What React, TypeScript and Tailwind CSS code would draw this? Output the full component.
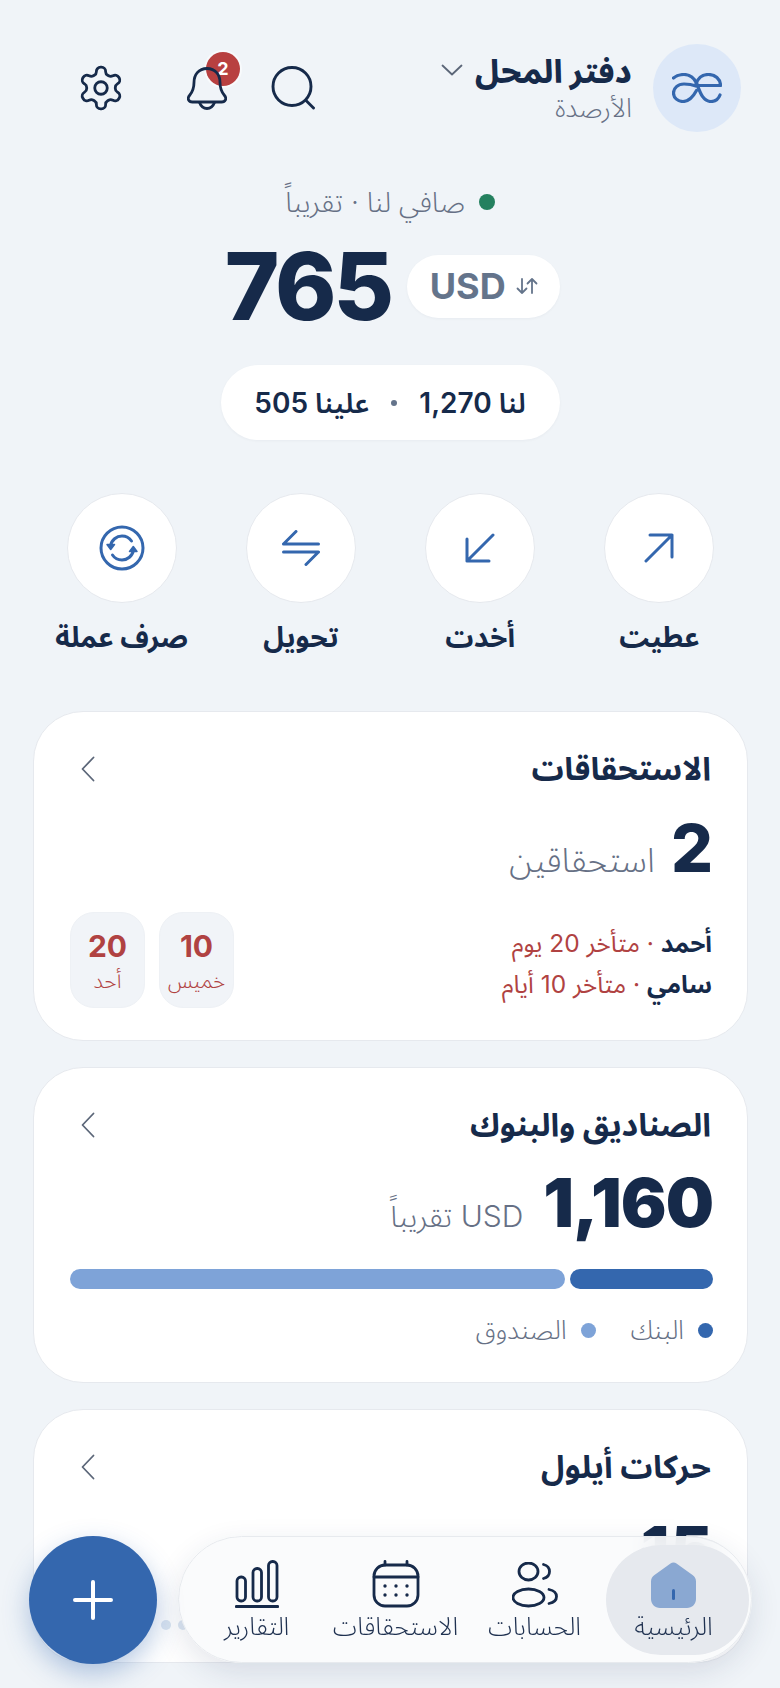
import React from "react";

const NAVY = "#162a4a";

function Logo() {
  return (
    <svg width="50" height="30" viewBox="0 0 50 30" fill="none" stroke="#3467ae" strokeWidth="3.200" strokeLinecap="round" strokeLinejoin="round">
      <path d="M1.500 5C5 2 9 1.500 12 1.500c6 0 10 3.500 12.500 8.500 3 7 5.500 18.500 14.500 18.500 4 0 7.500-2.500 9-6.500" />
      <path d="M24 13c-4-1.500-8-2-12-2C6 11 1.500 15 1.500 20S6 28.500 11 28.500c6 0 10-4.500 13.500-11" />
      <path d="M24 12.500h24.500C48.500 6 43 1.500 36.500 1.500 30 1.500 26 5 24 11" />
    </svg>
  );
}

function Chevron() {
  return (
    <svg className="ml-[11px]" width="14" height="26" viewBox="0 0 14 26" fill="none" stroke="#5b6678" strokeWidth="1.800" strokeLinecap="round" strokeLinejoin="round">
      <path d="M12.500 1.500 1.500 13l11 11.500" />
    </svg>
  );
}

function Search() {
  return (
    <svg width="44" height="44" viewBox="0 0 44 44" fill="none" stroke={NAVY} strokeWidth="2.900" strokeLinecap="round">
      <circle cx="21" cy="20.500" r="19" />
      <path d="M35 34.500l7.500 7.500" />
    </svg>
  );
}

function Bell() {
  return (
    <svg className="relative" width="40" height="43" viewBox="0 0 40 43" fill="none" stroke={NAVY} strokeWidth="2.800" strokeLinecap="round" strokeLinejoin="round">
      <path d="M20 1.500C11.500 1.500 7 8 7 15.500c0 6-1.500 9.500-4.500 13-2.500 3-1 6.500 3 6.500h29c4 0 5.500-3.500 3-6.500-3-3.500-4.500-7-4.500-13C33 8 28.500 1.500 20 1.500Z" />
      <path d="M12.500 35.500c1.500 4 4.500 6 7.500 6s6-2 7.500-6" />
    </svg>
  );
}

function Gear() {
  return (
    <svg className="m-[-4px]" width="50" height="50" viewBox="0 0 24 24" fill="none" stroke={NAVY} strokeWidth="1.350" strokeLinecap="round" strokeLinejoin="round">
      <path d="M12.220 2h-.44a2 2 0 0 0-2 2v.18a2 2 0 0 1-1 1.730l-.43.250a2 2 0 0 1-2 0l-.15-.080a2 2 0 0 0-2.730.730l-.220.380a2 2 0 0 0 .730 2.730l.150.100a2 2 0 0 1 1 1.720v.510a2 2 0 0 1-1 1.740l-.150.090a2 2 0 0 0-.730 2.730l.220.380a2 2 0 0 0 2.730.730l.150-.080a2 2 0 0 1 2 0l.430.250a2 2 0 0 1 1 1.730V20a2 2 0 0 0 2 2h.44a2 2 0 0 0 2-2v-.18a2 2 0 0 1 1-1.730l.430-.250a2 2 0 0 1 2 0l.150.080a2 2 0 0 0 2.730-.730l.220-.390a2 2 0 0 0-.730-2.730l-.150-.080a2 2 0 0 1-1-1.740v-.500a2 2 0 0 1 1-1.740l.150-.090a2 2 0 0 0 .730-2.730l-.220-.380a2 2 0 0 0-2.730-.730l-.150.080a2 2 0 0 1-2 0l-.430-.250a2 2 0 0 1-1-1.730V4a2 2 0 0 0-2-2z" />
      <circle cx="12" cy="12" r="3" />
    </svg>
  );
}

function Swap() {
  return (
    <svg width="22" height="18" viewBox="0 0 22 18" fill="none" stroke="#64748b" strokeWidth="1.800" strokeLinecap="round" strokeLinejoin="round">
      <path d="M6 2v14M1.500 11.500 6 16l4.500-4.500" />
      <path d="M16 16V2M11.500 6.500 16 2l4.500 4.500" />
    </svg>
  );
}

function ActionIcon({ kind }: { kind: string }) {
  const common = { fill: "none", stroke: "#3467ae", strokeWidth: 3, strokeLinecap: "round" as const, strokeLinejoin: "round" as const };
  if (kind === "up")
    return (
      <svg width="30" height="30" viewBox="0 0 30 30" {...common}>
        <path d="M2 28 28 2M6 2h22v22" />
      </svg>
    );
  if (kind === "down")
    return (
      <svg width="30" height="30" viewBox="0 0 30 30" {...common}>
        <path d="M28 2 2 28M2 6v22h22" />
      </svg>
    );
  if (kind === "swap")
    return (
      <svg width="38" height="36" viewBox="0 0 38 36" {...common}>
        <path d="M1.500 14h35M1.500 14 14 1.500M36.500 22h-35M36.500 22 24 34.500" />
      </svg>
    );
  return (
    <svg width="46" height="46" viewBox="0 0 46 46" {...common}>
      <circle cx="23" cy="23" r="21" />
      <path d="M11.500 21c1-6 6-10 11.500-10 4 0 7.500 2 9.500 5" />
      <path d="M34.500 25c-1 6-6 10-11.500 10-4 0-7.500-2-9.500-5" />
      <path d="M8 19.500h7.500L11.700 24.500Z" fill="#3467ae" strokeWidth="1.500" />
      <path d="M38 26.500h-7.500l3.800-5Z" fill="#3467ae" strokeWidth="1.500" />
    </svg>
  );
}

function Action({ kind, label }: { kind: string; label: string }) {
  return (
    <div className="flex flex-col items-center">
      <div className="w-[110px] h-[110px] rounded-full bg-white border border-[#e6e9ee] flex items-center justify-center">
        <ActionIcon kind={kind} />
      </div>
      <div className="mt-[16px] text-[28px] leading-[36px] font-bold text-[#162a4a] whitespace-nowrap">{label}</div>
    </div>
  );
}

function CardHead({ title }: { title: string }) {
  return (
    <div className="flex items-center justify-between h-[36px] pr-[2px]">
      <div className="text-[32px] leading-[36px] font-bold text-[#162a4a]">{title}</div>
      <Chevron />
    </div>
  );
}

function Tile({ n, d }: { n: string; d: string }) {
  return (
    <div className="w-[75px] h-[96px] rounded-[24px] bg-[#f1f4f8] border border-[#eef1f5] flex flex-col items-center">
      <div className="mt-[15px] text-[30px] leading-[36px] font-bold text-[#b04242]">{n}</div>
      <div className="mt-[4px] text-[21px] leading-[26px] font-light text-[#b04242]">{d}</div>
    </div>
  );
}

function NavItem({ label, children }: { label: string; children: React.ReactNode }) {
  return (
    <div className="relative flex-1 flex flex-col items-center">
      <div className="h-[48px] flex items-end justify-center">{children}</div>
      <div className="mt-[3px] text-[25px] leading-[30px] font-light text-[#1f3150] whitespace-nowrap">{label}</div>
    </div>
  );
}

export default function App() {
  return (
    <div
      dir="rtl"
      className="relative w-[780px] h-[1688px] overflow-hidden bg-[#f0f4f8] text-[#162a4a]"
      style={{ fontFamily: "Inter, 'Noto Sans Arabic', 'Noto Sans', 'DejaVu Sans', sans-serif" }}
    >
      <header className="flex items-center justify-between pt-[44px] pr-[39px] pl-[80px]">
        <div className="flex items-center gap-[21px]">
          <div className="w-[88px] h-[88px] rounded-full bg-[#dde8f8] flex items-center justify-center">
            <Logo />
          </div>
          <div className="flex flex-col items-start">
            <div className="flex items-start gap-[12px]">
              <div className="text-[32px] leading-[36px] font-extrabold pt-[1px]">دفتر المحل</div>
              <svg className="mt-[11px]" width="22" height="12" viewBox="0 0 22 12" fill="none" stroke="#5b6678" strokeWidth="1.800" strokeLinecap="round" strokeLinejoin="round">
                <path d="M1.500 1.500 11 10.500l9.500-9" />
              </svg>
            </div>
            <div className="mt-[2px] text-[26px] leading-[32px] font-light text-[#667085]">الأرصدة</div>
          </div>
        </div>
        <div className="flex items-center">
          <div className="ml-[44px]">
            <Search />
          </div>
          <div className="relative w-[40px] h-[43px] ml-[65px]">
            <div className="absolute left-[19px] top-[-15px] w-[34px] h-[34px] rounded-full bg-[#b84040] ring-2 ring-[#f8fafc] text-white text-[18px] font-bold flex items-center justify-center">
              2
            </div>
            <Bell />
          </div>
          <Gear />
        </div>
      </header>

      <section className="flex flex-col items-center mt-[52px]">
        <div className="flex items-center gap-[14px] h-[36px]">
          <span className="w-[16px] h-[16px] rounded-full bg-[#24805f]" />
          <span className="text-[28px] leading-[36px] font-light text-[#667085]">صافي لنا · تقريباً</span>
        </div>
        <div className="flex items-center gap-[16px] mt-[26px] h-[80px] pl-[5px]">
          <div className="w-[153px] h-[63px] rounded-full bg-white flex items-center justify-center gap-[10px] shadow-[0_1px_3px_rgba(15,23,42,0.04)]">
            <Swap />
            <span className="text-[36px] font-bold text-[#64748b]">USD</span>
          </div>
          <div className="text-[93px] leading-[80px] font-extrabold tracking-[-3px] text-[#162a4a]">765</div>
        </div>
        <div className="mt-[39px] w-[339px] h-[75px] rounded-full bg-white flex items-center justify-center gap-[22px] text-[28px] font-semibold text-[#162a4a] shadow-[0_1px_3px_rgba(15,23,42,0.04)]">
          <span>لنا 1,270</span>
          <span className="w-[6px] h-[6px] rounded-full bg-[#64748b]" />
          <span>علينا 505</span>
        </div>
      </section>

      <section className="grid grid-cols-4 pl-[32px] pr-[31px] mt-[53px]">
        <Action kind="up" label="عطيت" />
        <Action kind="down" label="أخدت" />
        <Action kind="swap" label="تحويل" />
        <Action kind="rotate" label="صرف عملة" />
      </section>

      <main className="pl-[33px] pr-[32px] mt-[56px] flex flex-col gap-[26px]">
        <article className="h-[330px] rounded-[50px] bg-white border border-[#e6e9ee] pr-[34px] pl-[36px] pt-[39px]">
          <CardHead title="الاستحقاقات" />
          <div className="flex items-baseline gap-[16px] mt-[28px]">
            <div className="text-[66px] leading-[66px] font-extrabold text-[#162a4a]">2</div>
            <div className="text-[34px] font-light text-[#667085]">استحقاقين</div>
          </div>
          <div className="flex items-center justify-between mt-[27px]">
            <div className="flex flex-col gap-[5px] pt-[6px] pr-[1px]">
              <div className="text-[24.5px] leading-[36px] text-[#b04242]">
                <b className="font-bold text-[#162a4a]">أحمد</b> · متأخر 20 يوم
              </div>
              <div className="text-[24.5px] leading-[36px] text-[#b04242]">
                <b className="font-bold text-[#162a4a]">سامي</b> · متأخر 10 أيام
              </div>
            </div>
            <div className="flex gap-[14px]">
              <Tile n="10" d="خميس" />
              <Tile n="20" d="أحد" />
            </div>
          </div>
        </article>

        <article className="h-[316px] rounded-[50px] bg-white border border-[#e6e9ee] pr-[34px] pl-[36px] pt-[39px]">
          <CardHead title="الصناديق والبنوك" />
          <div className="flex items-baseline gap-[20px] mt-[26px]">
            <div className="text-[68px] leading-[66px] font-black tracking-[-1px] text-[#162a4a]">1,160</div>
            <div className="text-[30px] font-light text-[#667085]">USD تقريباً</div>
          </div>
          <div className="flex gap-[5px] mt-[30px]">
            <div className="w-[143px] h-[20px] rounded-[10px] bg-[#3467ae]" />
            <div className="flex-1 h-[20px] rounded-[10px] bg-[#7ea3d8]" />
          </div>
          <div className="flex items-center mt-[23px] gap-[35px] text-[26px] leading-[36px] font-light text-[#667085]">
            <div className="flex items-center gap-[14px]">
              <span className="w-[15px] h-[15px] rounded-full bg-[#3467ae]" />
              <span>البنك</span>
            </div>
            <div className="flex items-center gap-[14px]">
              <span className="w-[15px] h-[15px] rounded-full bg-[#7ea3d8]" />
              <span>الصندوق</span>
            </div>
          </div>
        </article>

        <article className="h-[254px] rounded-[50px] bg-white border border-[#e6e9ee] pr-[34px] pl-[36px] pt-[39px]">
          <CardHead title="حركات أيلول" />
          <div className="flex items-baseline gap-[20px] mt-[32px]">
            <div className="text-[66px] leading-[66px] font-extrabold text-[#162a4a]">15</div>
          </div>
          <div className="flex gap-[7px] mt-[37px] flex-row-reverse justify-start pl-[91px]">
            <span className="w-[10px] h-[10px] rounded-full bg-[#dce6f2]" />
            <span className="w-[10px] h-[10px] rounded-full bg-[#dce6f2]" />
          </div>
        </article>
      </main>

      {/* floating bar */}
      <div className="absolute left-[178px] top-[1536px] w-[574px] h-[127px] rounded-full bg-[#fafbfc]/90 backdrop-blur-md border border-[#e7eaee] shadow-[0_10px_30px_rgba(30,50,90,0.12)] flex items-start px-[8px] pt-[23px]">
        <div className="absolute right-[2px] top-[8px] w-[143px] h-[110px] rounded-full bg-[#e6e9ee]" />
        <NavItem label="الرئيسية">
          <svg width="45" height="46" viewBox="0 0 45 46">
            <path d="M19.500 1.500c1.800-1.300 4.200-1.300 6 0L41.500 13c2.200 1.600 3.500 3.500 3.500 6.500V37c0 5-4 9-9 9H9c-5 0-9-4-9-9V19.500c0-3 1.300-4.900 3.500-6.500Z" fill="#8aa8d2" />
            <rect x="21" y="27" width="3" height="11" rx="1.500" fill="#3467ae" />
          </svg>
        </NavItem>
        <NavItem label="الحسابات">
          <svg width="46" height="46" viewBox="0 0 46 46" fill="none" stroke="#162a4a" strokeWidth="2.800" strokeLinecap="round">
            <ellipse cx="16.500" cy="9.500" rx="9.500" ry="8.500" />
            <ellipse cx="16.500" cy="35.500" rx="15.500" ry="8.500" />
            <path d="M31.500 2.500c4 1 6 4 6 7s-2 6-6 7" />
            <path d="M37 27.500c5 1 7.500 4 7.500 7s-2.500 6-7.500 7" />
          </svg>
        </NavItem>
        <NavItem label="الاستحقاقات">
          <svg width="48" height="48" viewBox="0 0 48 48" fill="none" stroke="#162a4a" strokeWidth="2.800" strokeLinecap="round">
            <rect x="2" y="5" width="44" height="41" rx="11" />
            <path d="M2 17h44M13 1.500v3.500M35 1.500v3.500" />
            <g fill="#162a4a" stroke="none">
              <circle cx="13" cy="26" r="1.700" /><circle cx="24" cy="26" r="1.700" /><circle cx="35" cy="26" r="1.700" />
              <circle cx="13" cy="35" r="1.700" /><circle cx="24" cy="35" r="1.700" /><circle cx="35" cy="35" r="1.700" />
            </g>
          </svg>
        </NavItem>
        <NavItem label="التقارير">
          <svg width="44" height="48" viewBox="0 0 44 48" fill="none" stroke="#162a4a" strokeWidth="2.800" strokeLinecap="round">
            <rect x="2" y="17" width="8.500" height="24" rx="4" />
            <rect x="18" y="8.500" width="8.500" height="32.500" rx="4" />
            <rect x="33.500" y="1.500" width="8.500" height="39.500" rx="4" />
            <path d="M1.500 46.500h41" strokeWidth="3.200" />
          </svg>
        </NavItem>
      </div>

      <div className="absolute left-[29px] top-[1536px] w-[128px] h-[128px] rounded-full bg-[#3467ae] shadow-[0_10px_26px_rgba(52,103,174,0.35)] flex items-center justify-center">
        <svg width="40" height="40" viewBox="0 0 40 40" fill="none" stroke="#fff" strokeWidth="4" strokeLinecap="round">
          <path d="M20 2v36M2 20h36" />
        </svg>
      </div>
    </div>
  );
}
